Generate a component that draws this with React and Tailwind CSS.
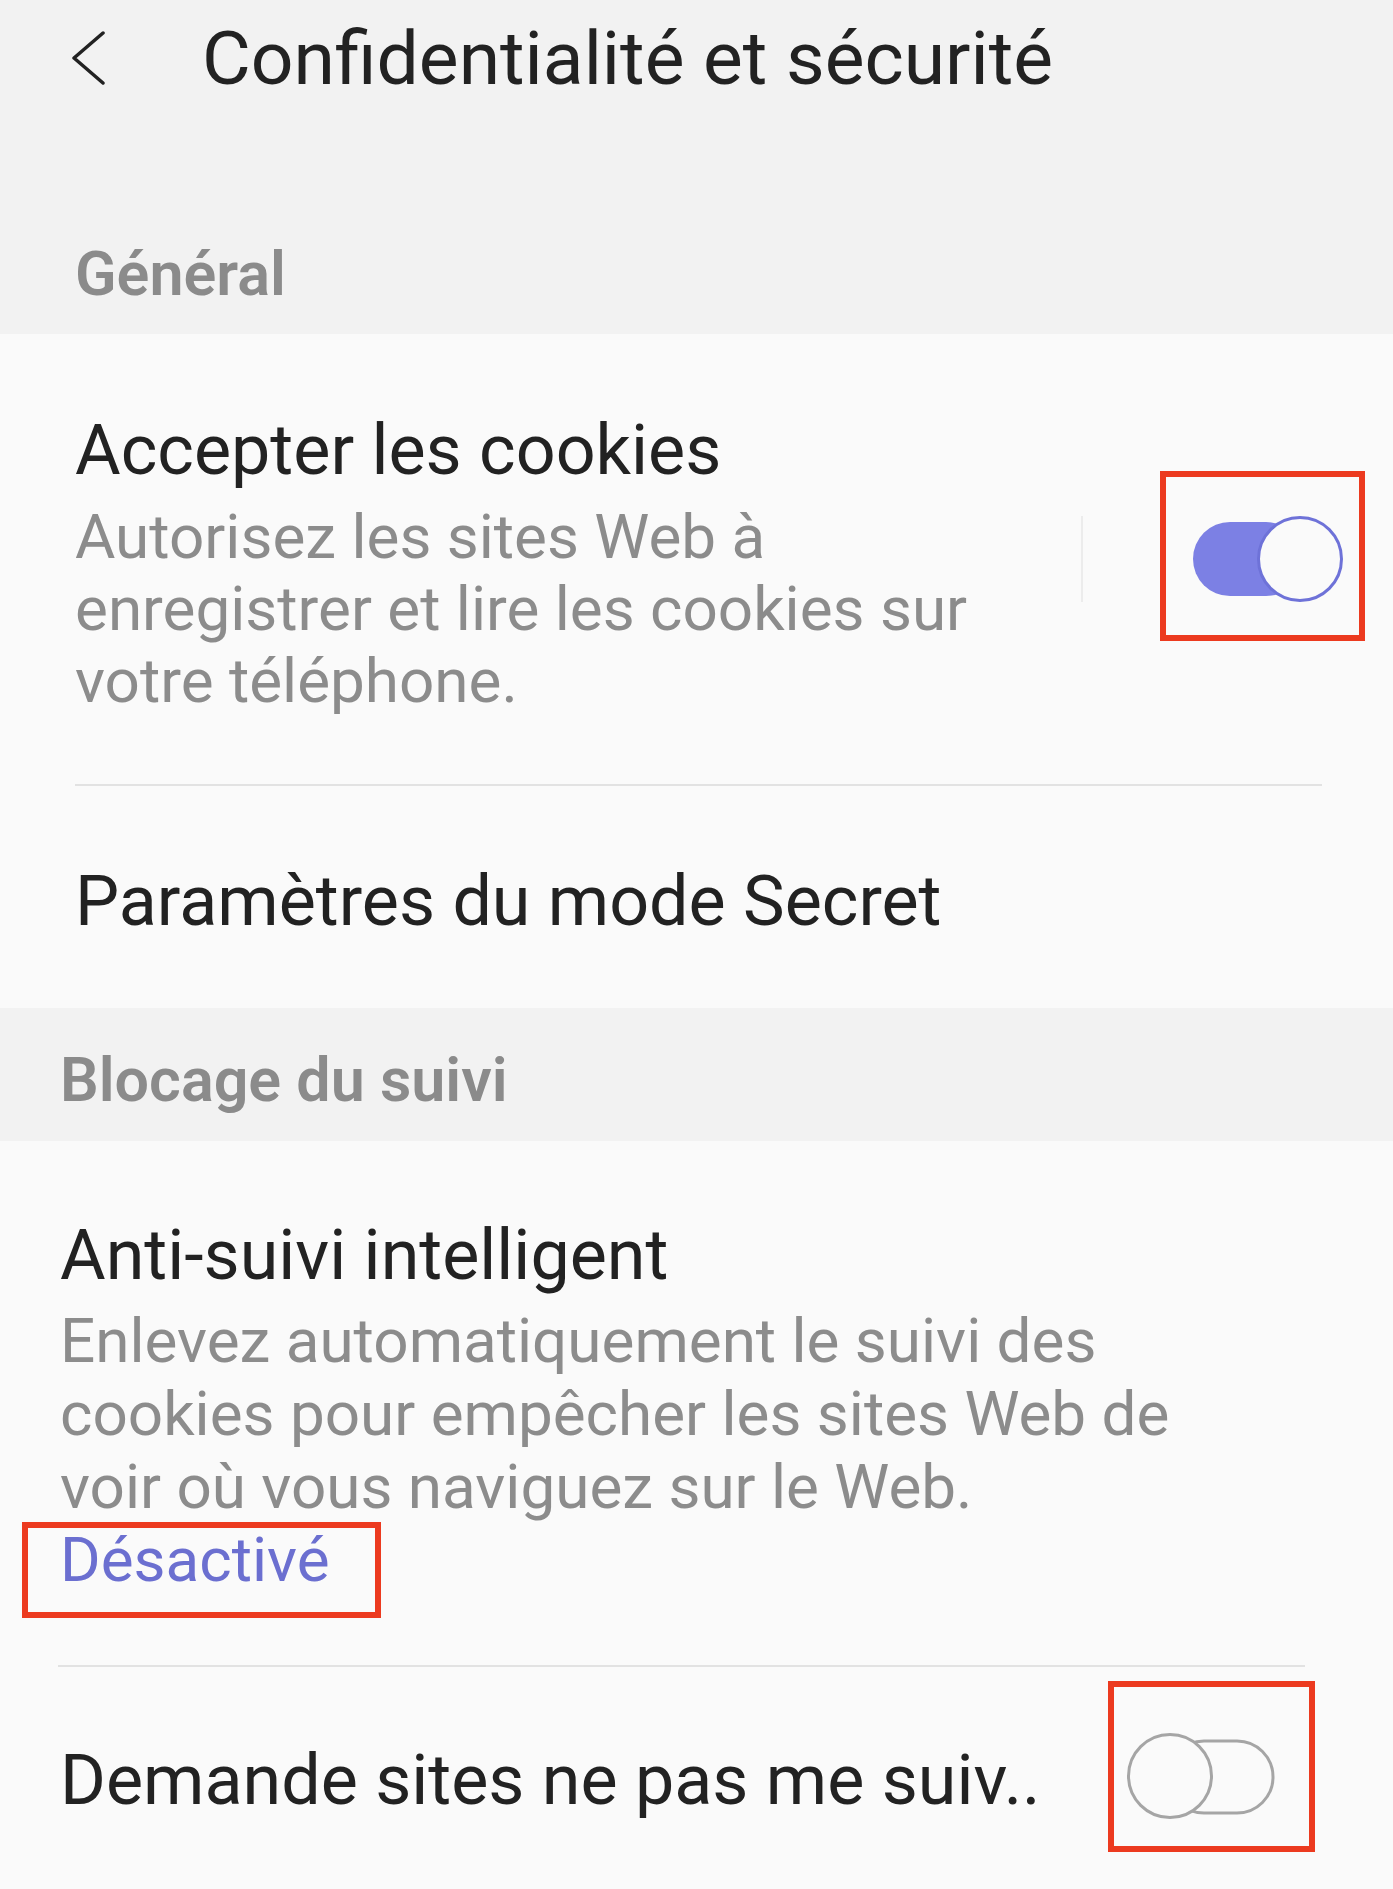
import React from "react";

const ToggleOn = () => (
  <svg className="absolute inset-0" width="205" height="170" viewBox="0 0 205 170">
    <rect x="33" y="51" width="110" height="74" rx="37" fill="#7c80e4" />
    <circle cx="140" cy="88" r="41.5" fill="#fafafa" stroke="#6e72d8" strokeWidth="3" />
  </svg>
);

const ToggleOff = () => (
  <svg className="absolute inset-0" width="207" height="171" viewBox="0 0 207 171">
    <rect x="60" y="60" width="105" height="72" rx="36" fill="none" stroke="#a5a5a5" strokeWidth="3" />
    <circle cx="62" cy="95" r="41.5" fill="#fafafa" stroke="#a5a5a5" strokeWidth="3" />
  </svg>
);

const Marked = ({ className, children }) => (
  <div className={`relative ${className}`}>
    <div className="absolute inset-0 border-[6px] border-[#ec3a1f]" />
    {children}
  </div>
);

export default function App() {
  return (
    <div className="w-[1393px] h-[1889px] overflow-hidden bg-[#fafafa] font-['Roboto','Noto_Sans',sans-serif]">
      {/* header + Général */}
      <div className="h-[334px] bg-[#f2f2f2]">
        <div className="h-[116px] flex items-center pl-[70px]">
          <svg width="36" height="54" viewBox="0 0 36 54" fill="none">
            <path d="M33 2 L4 27 L33 52" stroke="#222" strokeWidth="3.5" strokeLinecap="round" strokeLinejoin="round" />
          </svg>
          <h1 className="ml-[96px] text-[75px] leading-[116px] text-[#222] font-normal">
            Confidentialité et sécurité
          </h1>
        </div>
        <div className="mt-[118px] pl-[75px] text-[61px] leading-[80px] font-semibold text-[#8b8b8b]">
          Général
        </div>
      </div>

      {/* Accepter les cookies */}
      <div className="flex pl-[75px] pt-[74px] pb-[67px]">
        <div className="w-[1006px]">
          <div className="text-[70px] leading-[84px] text-[#222]">Accepter les cookies</div>
          <div className="mt-[9px] text-[62px] leading-[72px] text-[#8c8c8c]">
            <div>Autorisez les sites Web à</div>
            <div>enregistrer et lire les cookies sur</div>
            <div>votre téléphone.</div>
          </div>
        </div>
        <div className="w-[2px] h-[86px] mt-[108px] bg-[#ececec]" />
        <Marked className="ml-[77px] mt-[63px] w-[205px] h-[170px]">
          <ToggleOn />
        </Marked>
      </div>

      <div className="ml-[75px] w-[1247px] h-[2px] bg-[#e2e2e2]" />

      <div className="pl-[75px] pt-[73px] pb-[65px] text-[70px] leading-[84px] text-[#222]">
        Paramètres du mode Secret
      </div>

      {/* Blocage du suivi */}
      <div className="h-[133px] bg-[#f2f2f2] pl-[60px] pt-[32px] text-[61px] leading-[80px] font-semibold text-[#8b8b8b]">
        Blocage du suivi
      </div>

      <div className="pl-[60px] pt-[72px]">
        <div className="text-[70px] leading-[84px] text-[#222]">Anti-suivi intelligent</div>
        <div className="mt-[7px] text-[62px] leading-[73px] text-[#8c8c8c]">
          <div>Enlevez automatiquement le suivi des</div>
          <div>cookies pour empêcher les sites Web de</div>
          <div>voir où vous naviguez sur le Web.</div>
        </div>
        <div className="relative w-fit">
          <div className="text-[62px] leading-[73px] text-[#6b6fd0]">Désactivé</div>
          <div className="absolute left-[-38px] top-[-1px] w-[359px] h-[96px] border-[6px] border-[#ec3a1f]" />
        </div>
      </div>

      <div className="ml-[58px] mt-[69px] w-[1247px] h-[2px] bg-[#e2e2e2]" />

      <div className="flex pl-[60px]">
        <div className="pt-[71px] w-[1048px] text-[70px] leading-[84px] text-[#222] whitespace-nowrap">
          Demande sites ne pas me suiv..
        </div>
        <Marked className="mt-[14px] w-[207px] h-[171px]">
          <ToggleOff />
        </Marked>
      </div>
    </div>
  );
}
